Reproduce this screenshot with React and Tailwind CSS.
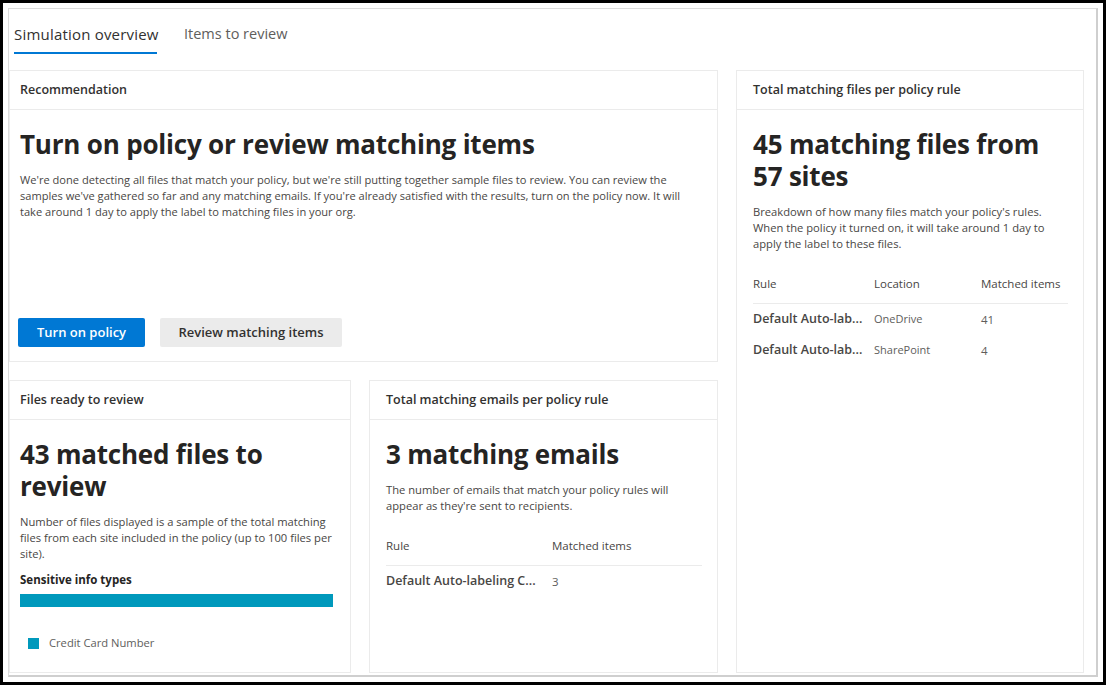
import React from "react";

const font = { fontFamily: '"Open Sans", "Noto Sans", sans-serif' };

function Card({ title, pad = "px-[16px]", className = "", children }) {
  return (
    <div className={`flex flex-col border border-[#ebebeb] bg-white ${className}`}>
      <div className={`h-[39px] shrink-0 flex items-center border-b border-[#ebebeb] ${pad}`}>
        <span className="text-[12.5px] font-semibold text-[#323130]">{title}</span>
      </div>
      <div className={`flex flex-col flex-1 ${pad} pt-[18px]`}>{children}</div>
    </div>
  );
}

function BigTitle({ children }) {
  return (
    <h2 className="text-[26px] leading-[32px] font-bold text-[#252423] tracking-[-0.2px]">
      {children}
    </h2>
  );
}

function Desc({ size = "text-[11.2px]", children }) {
  return (
    <p className={`mt-[12px] ${size} leading-[16px] text-[#484644]`}>{children}</p>
  );
}

export default function App() {
  return (
    <div className="w-[1108px] h-[686px] bg-white" style={font}>
      <div className="w-[1106px] h-[685px] border-[3px] border-black p-[5px]">
        <div className="h-full flex flex-col border-l border-t border-r-[2px] border-b-[2px] border-l-[#dcdcdc] border-t-[#dcdcdc] border-r-[#cfcfcf] border-b-[#cfcfcf]">
          {/* tabs */}
          <div className="h-[61px] shrink-0 flex gap-[27px] pl-[5px] pt-[15px]">
            <div className="w-[143px] flex flex-col">
              <span className="text-[15px] leading-[20px] font-medium tracking-[0.2px] text-[#323130] whitespace-nowrap">
                Simulation overview
              </span>
              <div className="mt-[8px] h-[2px] bg-[#0078d4]" />
            </div>
            <span className="text-[14.5px] leading-[20px] text-[#605e5c]">Items to review</span>
          </div>

          <div className="flex h-[603px]">
            {/* left column */}
            <div className="w-[709px] flex flex-col gap-[18px]">
              <Card title="Recommendation" pad="px-[10px]" className="h-[292px]">
                <BigTitle>Turn on policy or review matching items</BigTitle>
                <p className="mt-[12px] max-w-[680px] text-[11.1px] leading-[16px] text-[#484644]">
                  We're done detecting all files that match your policy, but we're still putting together sample files to review. You can review the samples we've gathered so far and any matching emails. If you're already satisfied with the results, turn on the policy now. It will take around 1 day to apply the label to matching files in your org.
                </p>
                <div className="mt-auto mb-[14px] -ml-[2px] flex gap-[15px]">
                  <button className="h-[29px] w-[127px] rounded-[2px] bg-[#0078d4] text-white text-[13px] font-semibold">
                    Turn on policy
                  </button>
                  <button className="h-[29px] w-[182px] rounded-[2px] bg-[#ebebeb] text-[#323130] text-[13px] font-semibold">
                    Review matching items
                  </button>
                </div>
              </Card>

              <div className="flex gap-[18px] h-[293px]">
                <Card title="Files ready to review" pad="px-[10px]" className="w-[342px]">
                  <BigTitle>43 matched files to review</BigTitle>
                  <Desc>
                    Number of files displayed is a sample of the total matching files from each site included in the policy (up to 100 files per site).
                  </Desc>
                  <div className="mt-[10px] text-[11.5px] leading-[16px] font-bold text-[#252423]">
                    Sensitive info types
                  </div>
                  <div className="mt-[6px] h-[13px] w-[313px] bg-[#0099bc]" />
                  <div className="mt-[28px] ml-[8px] flex items-center gap-[10px]">
                    <div className="w-[11px] h-[11px] bg-[#0099bc]" />
                    <span className="text-[11.2px] text-[#605e5c]">Credit Card Number</span>
                  </div>
                </Card>

                <Card title="Total matching emails per policy rule" className="w-[349px]">
                  <BigTitle>3 matching emails</BigTitle>
                  <Desc>
                    The number of emails that match your policy rules will appear as they're sent to recipients.
                  </Desc>
                  <div className="mt-[12px] w-[316px]">
                    <div className="h-[40px] flex items-center border-b border-[#ebebeb] text-[11.5px] text-[#484644]">
                      <span className="w-[166px]">Rule</span>
                      <span>Matched items</span>
                    </div>
                    <div className="h-[31px] flex items-center">
                      <span className="w-[166px] text-[12.5px] font-semibold text-[#484644]">Default Auto-labeling C...</span>
                      <span className="text-[11.5px] text-[#605e5c]">3</span>
                    </div>
                  </div>
                </Card>
              </div>
            </div>

            {/* right column */}
            <Card title="Total matching files per policy rule" className="w-[348px] ml-[18px]">
              <BigTitle>
                <span className="block">45 matching files from</span>
                <span className="block">57 sites</span>
              </BigTitle>
              <Desc>
                Breakdown of how many files match your policy's rules. When the policy it turned on, it will take around 1 day to apply the label to these files.
              </Desc>
              <div className="mt-[12px] w-[315px]">
                <div className="h-[40px] flex items-center border-b border-[#ebebeb] text-[11.5px] text-[#484644]">
                  <span className="w-[121px]">Rule</span>
                  <span className="w-[107px]">Location</span>
                  <span>Matched items</span>
                </div>
                {[
                  ["OneDrive", "41"],
                  ["SharePoint", "4"],
                ].map(([loc, n]) => (
                  <div key={loc} className="h-[31px] flex items-center">
                    <span className="w-[121px] text-[12.5px] font-semibold text-[#484644]">Default Auto-lab...</span>
                    <span className="w-[107px] text-[11px] text-[#605e5c]">{loc}</span>
                    <span className="text-[11.5px] text-[#605e5c]">{n}</span>
                  </div>
                ))}
              </div>
            </Card>
          </div>
        </div>
      </div>
    </div>
  );
}
